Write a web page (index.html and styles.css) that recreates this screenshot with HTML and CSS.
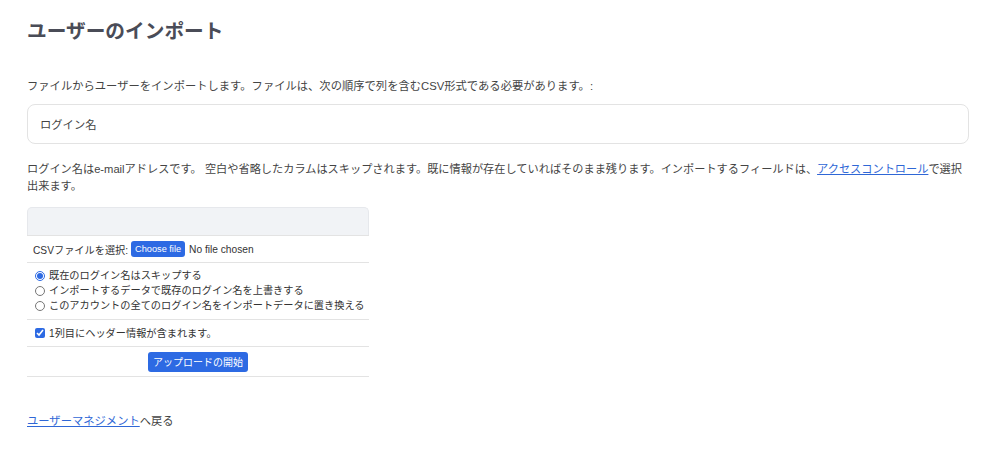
FILE: index.html
```html
<!DOCTYPE html>
<html lang="ja">
<head>
<meta charset="utf-8">
<title>ユーザーのインポート</title>
<link rel="stylesheet" href="styles.css">
</head>
<body>
<main class="page">
  <h1 class="title">ユーザーのインポート</h1>
  <p class="intro">ファイルからユーザーをインポートします。ファイルは、次の順序で列を含むCSV形式である必要があります。:</p>
  <div class="columns">ログイン名</div>
  <p class="note">ログイン名はe-mailアドレスです。 空白や省略したカラムはスキップされます。既に情報が存在していればそのまま残ります。インポートするフィールドは、<a href="#" class="link">アクセスコントロール</a>で選択出来ます。</p>

  <div class="upload">
    <div class="upload-head"></div>
    <div class="row file-row">
      <span>CSVファイルを選択:</span>
      <span class="file-btn">Choose file</span>
      <span>No file chosen</span>
    </div>
    <div class="row radio-row">
      <label class="opt"><input type="radio" name="mode" checked> 既在のログイン名はスキップする</label>
      <label class="opt"><input type="radio" name="mode"> インポートするデータで既存のログイン名を上書きする</label>
      <label class="opt"><input type="radio" name="mode"> このアカウントの全てのログイン名をインポートデータに置き換える</label>
    </div>
    <div class="row check-row">
      <label class="opt"><input type="checkbox" checked> 1列目にヘッダー情報が含まれます。</label>
    </div>
    <div class="row submit-row">
      <button class="btn" type="button">アップロードの開始</button>
    </div>
  </div>

  <p class="back"><a href="#" class="link">ユーザーマネジメント</a>へ戻る</p>
</main>
</body>
</html>
```
FILE: styles.css
```css
html, body {
  margin: 0;
  padding: 0;
  background: #ffffff;
}
body {
  font-family: "Liberation Sans", "Noto Sans CJK JP", sans-serif;
  color: #444;
}
.page {
  padding: 17px 15px 20px 27px;
}
.title {
  margin: 0;
  font-size: 19.7px;
  line-height: 28px;
  font-weight: bold;
  color: #4a4c57;
}
.intro {
  margin: 32px 0 0;
  font-size: 11.3px;
  line-height: 18px;
}
.columns {
  margin-top: 9px;
  height: 38px;
  border: 1px solid #e3e3e3;
  border-radius: 8px;
  display: flex;
  align-items: center;
  padding-left: 12px;
  font-size: 11.3px;
  color: #444;
}
.note {
  margin: 17px 0 0;
  font-size: 11.2px;
  line-height: 17px;
}
.link {
  color: #2f67d6;
  text-decoration: underline;
}
.upload {
  margin-top: 12px;
  width: 342px;
  font-size: 10.2px;
  color: #333;
}
.upload-head {
  height: 27px;
  background: #f1f3f6;
  border: 1px solid #e6e8ec;
  border-bottom: none;
  border-radius: 5px 5px 0 0;
}
.row {
  border-top: 1px solid #e3e3e3;
}
.file-row {
  height: 26px;
  display: flex;
  align-items: center;
  gap: 3px;
  padding-left: 6px;
}
.file-btn {
  background: #2d6ae3;
  color: #fff;
  font-size: 9.2px;
  line-height: 16px;
  padding: 0 4px;
  border-radius: 3px;
  margin-right: 1px;
}
.radio-row {
  padding: 5px 0 6px 8px;
  display: flex;
  flex-direction: column;
}
.opt {
  display: flex;
  align-items: center;
  gap: 4px;
  line-height: 15px;
  font-size: 10.2px;
  color: #333;
  white-space: nowrap;
}
.opt input {
  margin: 0;
  width: 10px;
  height: 10px;
  accent-color: #2d6ae3;
}
.check-row {
  height: 26px;
  display: flex;
  align-items: center;
  padding-left: 8px;
}
.submit-row {
  height: 29px;
  display: flex;
  align-items: center;
  justify-content: center;
  border-bottom: 1px solid #e3e3e3;
}
.btn {
  background: #2d6ae3;
  color: #fff;
  border: none;
  border-radius: 3px;
  font-family: inherit;
  font-size: 10px;
  height: 20px;
  padding: 0 5px;
}
.back {
  margin: 36px 0 0;
  font-size: 11.3px;
  line-height: 17px;
}
```
